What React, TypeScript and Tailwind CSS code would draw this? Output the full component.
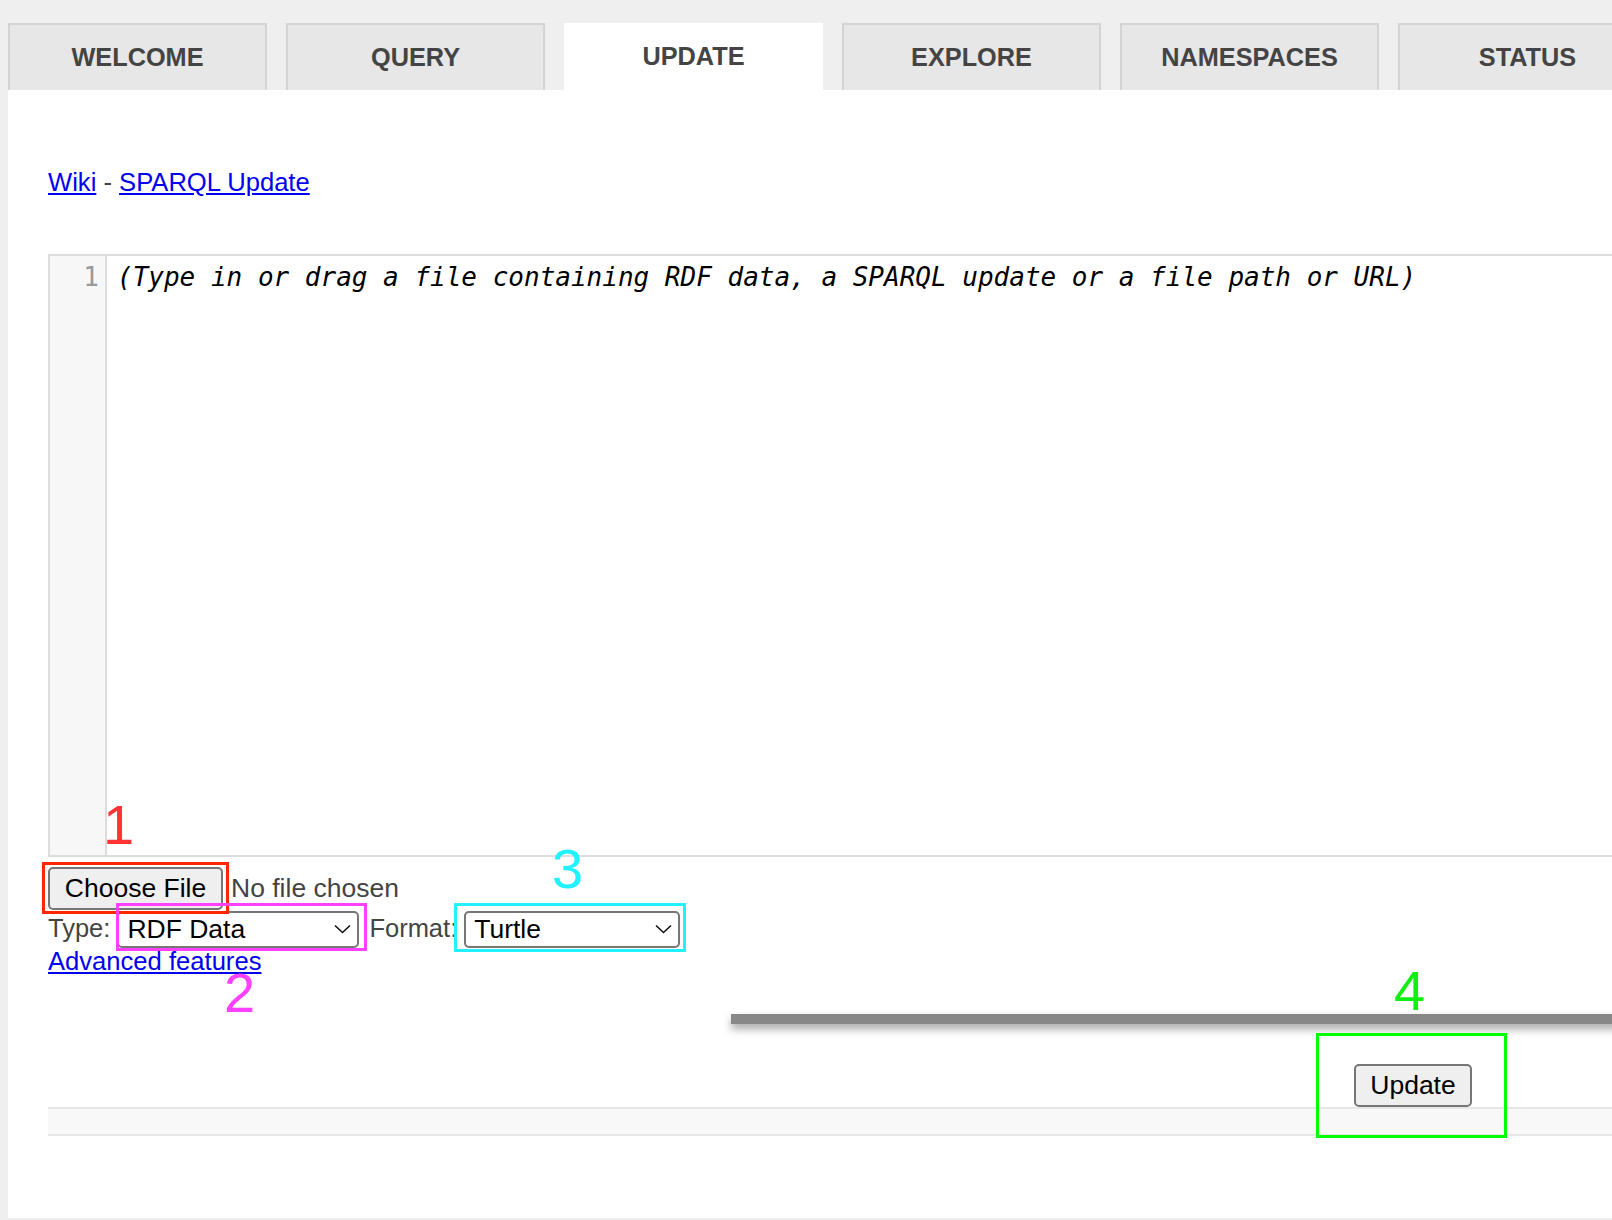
import React from "react";

const tabs = ["WELCOME", "QUERY", "UPDATE", "EXPLORE", "NAMESPACES", "STATUS"];

function Chevron() {
  return (
    <svg
      className="pointer-events-none absolute right-[8px] top-1/2 -translate-y-1/2"
      width="17"
      height="10"
      viewBox="0 0 17 10"
      fill="none"
    >
      <polyline points="1,1.5 8.5,8.5 16,1.5" stroke="#111" strokeWidth="1.6" fill="none" />
    </svg>
  );
}

function Select({ width, label, options }: { width: string; label: string; options: string[] }) {
  return (
    <div className={`relative h-[37px] ${width}`}>
      <select
        defaultValue={label}
        className="h-full w-full appearance-none rounded-[5px] border-2 border-[#767676] bg-white pl-[8px] text-[26.5px] leading-none text-black outline-none"
        style={{ fontFamily: "'Liberation Sans', Arial, sans-serif" }}
      >
        {options.map((o) => (
          <option key={o}>{o}</option>
        ))}
      </select>
      <Chevron />
    </div>
  );
}

export default function App() {
  return (
    <div className="min-h-[1220px] w-full overflow-hidden bg-[#efefef] font-['Liberation_Sans',Arial,sans-serif] text-[#444]">
      {/* Tabs */}
      <div className="flex w-max gap-[19px] pl-[8px] pt-[23px]">
        {tabs.map((t) =>
          t === "UPDATE" ? (
            <div
              key={t}
              className="flex h-[67px] w-[259px] shrink-0 items-center justify-center bg-white text-[25.3px] font-bold text-[#444]"
            >
              {t}
            </div>
          ) : (
            <div
              key={t}
              className="flex h-[67px] w-[259px] shrink-0 items-center justify-center border-2 border-b-0 border-[#d4d4d4] bg-[#e7e7e7] text-[25.3px] font-bold text-[#444]"
            >
              {t}
            </div>
          )
        )}
      </div>

      {/* Content */}
      <div className="relative ml-[8px] h-[1128px] bg-white pl-[40px] pt-[78px]">
        <div className="text-[25.6px] leading-[29px]">
          <a href="#" className="text-[#0000ee] underline">
            Wiki
          </a>
          <span> - </span>
          <a href="#" className="text-[#0000ee] underline">
            SPARQL Update
          </a>
        </div>

        {/* Editor */}
        <div className="mt-[57px] flex h-[603px] w-[1620px] border-2 border-[#dddddd]">
          <div className="w-[57px] shrink-0 border-r-2 border-[#dddddd] bg-[#f7f7f7] pr-[6px] pt-[6px] text-right font-['DejaVu_Sans_Mono',monospace] text-[26px] leading-[30px] text-[#999]">
            1
          </div>
          <div className="pl-[10px] pt-[6px] font-['DejaVu_Sans_Mono',monospace] text-[26px] italic leading-[30px] whitespace-nowrap text-black">
            (Type in or drag a file containing RDF data, a SPARQL update or a file path or URL)
          </div>
        </div>

        {/* File row */}
        <div className="mt-[10px] flex h-[43px] items-center">
          <button className="h-[43px] w-[175px] rounded-[5px] border-2 border-[#767676] bg-[#efefef] text-[26.5px] leading-none text-black">
            Choose File
          </button>
          <span className="ml-[8px] text-[26.5px] text-[#444]">No file chosen</span>
        </div>

        {/* Type row */}
        <div className="flex h-[37px] items-center text-[25.5px]">
          <span>Type:</span>
          <div className="ml-[7px]">
            <Select width="w-[242px]" label="RDF Data" options={["RDF Data", "SPARQL Update", "File Path or URL"]} />
          </div>
          <span className="ml-[10px]">Format:</span>
          <div className="ml-[7px]">
            <Select width="w-[216px]" label="Turtle" options={["Turtle", "N-Triples", "RDF/XML", "JSON-LD", "TriG", "N-Quads"]} />
          </div>
        </div>

        <div className="text-[25.6px] leading-[29px]">
          <a href="#" className="text-[#0000ee] underline">
            Advanced features
          </a>
        </div>

        {/* Gray bar */}
        <div className="ml-[683px] mt-[38px] h-[10px] w-[1000px] bg-[#888888] shadow-[0_5px_8px_rgba(0,0,0,0.35)]" />

        {/* Update button */}
        <div className="mt-[40px] pl-[1306px]">
          <button className="h-[43px] w-[118px] rounded-[5px] border-2 border-[#767676] bg-[#efefef] text-[26.5px] leading-none text-black">
            Update
          </button>
        </div>

        {/* Band */}
        <div className="h-[29px] w-[1620px] border-y-2 border-[#e6e6e6] bg-[#f8f8f8]" />

        {/* Annotations */}
        <div className="pointer-events-none absolute left-[34px] top-[772px] h-[52px] w-[187px] border-[3px] border-[#ff2600]" />
        <div className="pointer-events-none absolute left-[108px] top-[813px] h-[48px] w-[251px] border-[3px] border-[#ff40ff]" />
        <div className="pointer-events-none absolute left-[446px] top-[813px] h-[49px] w-[232px] border-[3px] border-[#22f2ff]" />
        <div className="pointer-events-none absolute left-[1308px] top-[943px] h-[105px] w-[191px] border-[3px] border-[#00ff00]" />

        <div className="pointer-events-none absolute left-[95px] top-[707px] text-[56px] leading-none text-[#ff3535]">1</div>
        <div className="pointer-events-none absolute left-[216px] top-[875px] text-[56px] leading-none text-[#ff40ff]">2</div>
        <div className="pointer-events-none absolute left-[544px] top-[751px] text-[56px] leading-none text-[#22f2ff]">3</div>
        <div className="pointer-events-none absolute left-[1386px] top-[873px] text-[56px] leading-none text-[#11ee11]">4</div>
      </div>
    </div>
  );
}
